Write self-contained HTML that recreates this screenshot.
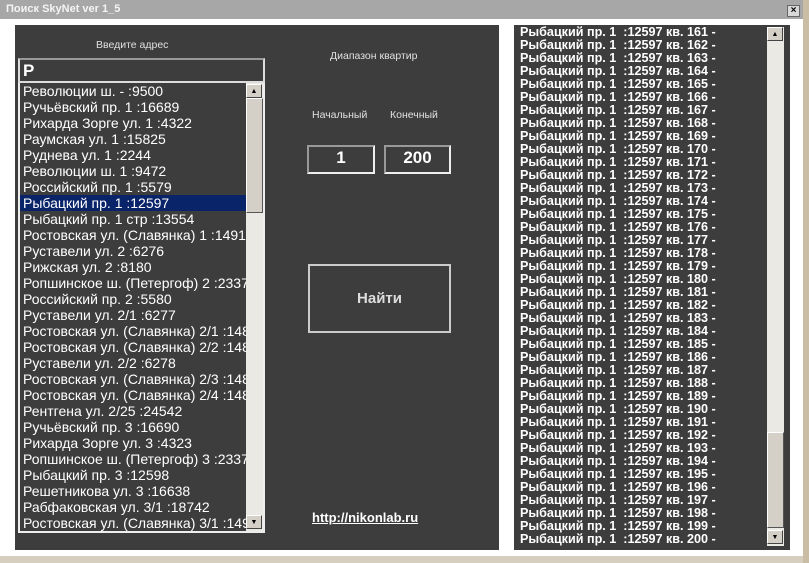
<!DOCTYPE html><html><head><meta charset="utf-8"><style>
*{margin:0;padding:0;box-sizing:border-box}
body{width:809px;height:563px;overflow:hidden;background:#fff;font-family:"Liberation Sans",sans-serif;position:relative}
.abs{position:absolute}
.title{left:0;top:0;width:803px;height:19px;background:#a7a7a7;color:#f4f4f4;font-weight:bold;font-size:11px;line-height:19px;padding-left:6px}
.frame{left:803px;top:0;width:6px;height:563px;background:#c9bda6}
.x{left:787px;top:5px;width:13px;height:12px;background:#d8d8d8;border:1px solid #666;font-size:10px;line-height:10px;text-align:center;font-weight:bold}
.panel{left:15px;top:25px;width:484px;height:525px;background:#3d3d3d}
.rp{left:514px;top:25px;width:276px;height:525px;background:#3d3d3d}
.lbl{color:#e0e0e0;font-size:10.5px}
.inp{left:18px;top:58px;width:247px;height:25px;border:2px solid #ddd;border-top-color:#999;color:#fff;font-weight:bold;font-size:17px;line-height:22px;padding-left:3px}
.list{left:18px;top:83px;width:247px;height:450px;border:2px solid #eee;border-top:0;overflow:hidden}
.list div{height:16px;font-size:14px;color:#fff;line-height:16px;padding-left:3px;white-space:nowrap}
.list .sel{background:#0a246a}
.sb{background:#ebe9e4}
.thumb{background:#d4d0c8;border:1px solid #fff;border-right-color:#555;border-bottom-color:#555}
.arr{background:#d4d0c8;border:1px solid #fff;border-right-color:#444;border-bottom-color:#444;font-size:7px;text-align:center;line-height:13px;color:#000}
.num{border:2px solid #eee;border-top-color:#999;border-left-color:#999;color:#fff;font-weight:bold;font-size:17px;text-align:center;line-height:22px}
.btn{left:308px;top:264px;width:143px;height:69px;border:2px solid #ccc;color:#ddd;font-weight:bold;font-size:15px;text-align:center;line-height:65px}
.rl div{height:13px;font-size:12.6px;font-weight:bold;color:#fff;line-height:13px;white-space:pre}
.link{left:312px;top:510px;color:#fff;font-weight:bold;font-size:13px;text-decoration:underline}
.task{left:0;top:556px;width:803px;height:7px;background:#d6cfc0}
</style></head><body>
<div class="abs title">Поиск SkyNet ver 1_5</div>
<div class="abs frame"></div>
<div class="abs x">×</div>
<div class="abs panel"></div>
<div class="abs lbl" style="left:96px;top:39px">Введите адрес</div>
<div class="abs lbl" style="left:330px;top:50px">Диапазон квартир</div>
<div class="abs lbl" style="left:312px;top:109px">Начальный</div>
<div class="abs lbl" style="left:390px;top:109px">Конечный</div>
<div class="abs inp">Р</div>
<div class="abs list">
<div>Революции ш. - :9500</div><div>Ручьёвский пр. 1 :16689</div><div>Рихарда Зорге ул. 1 :4322</div><div>Раумская ул. 1 :15825</div><div>Руднева ул. 1 :2244</div><div>Революции ш. 1 :9472</div><div>Российский пр. 1 :5579</div><div class="sel">Рыбацкий пр. 1 :12597</div><div>Рыбацкий пр. 1 стр :13554</div><div>Ростовская ул. (Славянка) 1 :14919</div><div>Руставели ул. 2 :6276</div><div>Рижская ул. 2 :8180</div><div>Ропшинское ш. (Петергоф) 2 :23378</div><div>Российский пр. 2 :5580</div><div>Руставели ул. 2/1 :6277</div><div>Ростовская ул. (Славянка) 2/1 :1485</div><div>Ростовская ул. (Славянка) 2/2 :1485</div><div>Руставели ул. 2/2 :6278</div><div>Ростовская ул. (Славянка) 2/3 :1485</div><div>Ростовская ул. (Славянка) 2/4 :1485</div><div>Рентгена ул. 2/25 :24542</div><div>Ручьёвский пр. 3 :16690</div><div>Рихарда Зорге ул. 3 :4323</div><div>Ропшинское ш. (Петергоф) 3 :23379</div><div>Рыбацкий пр. 3 :12598</div><div>Решетникова ул. 3 :16638</div><div>Рабфаковская ул. 3/1 :18742</div><div>Ростовская ул. (Славянка) 3/1 :1494</div>
</div>
<div class="abs sb" style="left:246px;top:83px;width:17px;height:448px"></div>
<div class="abs arr" style="left:246px;top:84px;width:16px;height:14px">▲</div>
<div class="abs thumb" style="left:246px;top:98px;width:17px;height:115px"></div>
<div class="abs arr" style="left:246px;top:515px;width:16px;height:14px">▼</div>
<div class="abs num" style="left:307px;top:145px;width:68px;height:29px">1</div>
<div class="abs num" style="left:384px;top:145px;width:67px;height:29px">200</div>
<div class="abs btn">Найти</div>
<div class="abs link">http://nikonlab.ru</div>
<div class="abs rp"></div>
<div class="abs rl" style="left:520px;top:26px">
<div>Рыбацкий пр. 1  :12597 кв. 161 -</div><div>Рыбацкий пр. 1  :12597 кв. 162 -</div><div>Рыбацкий пр. 1  :12597 кв. 163 -</div><div>Рыбацкий пр. 1  :12597 кв. 164 -</div><div>Рыбацкий пр. 1  :12597 кв. 165 -</div><div>Рыбацкий пр. 1  :12597 кв. 166 -</div><div>Рыбацкий пр. 1  :12597 кв. 167 -</div><div>Рыбацкий пр. 1  :12597 кв. 168 -</div><div>Рыбацкий пр. 1  :12597 кв. 169 -</div><div>Рыбацкий пр. 1  :12597 кв. 170 -</div><div>Рыбацкий пр. 1  :12597 кв. 171 -</div><div>Рыбацкий пр. 1  :12597 кв. 172 -</div><div>Рыбацкий пр. 1  :12597 кв. 173 -</div><div>Рыбацкий пр. 1  :12597 кв. 174 -</div><div>Рыбацкий пр. 1  :12597 кв. 175 -</div><div>Рыбацкий пр. 1  :12597 кв. 176 -</div><div>Рыбацкий пр. 1  :12597 кв. 177 -</div><div>Рыбацкий пр. 1  :12597 кв. 178 -</div><div>Рыбацкий пр. 1  :12597 кв. 179 -</div><div>Рыбацкий пр. 1  :12597 кв. 180 -</div><div>Рыбацкий пр. 1  :12597 кв. 181 -</div><div>Рыбацкий пр. 1  :12597 кв. 182 -</div><div>Рыбацкий пр. 1  :12597 кв. 183 -</div><div>Рыбацкий пр. 1  :12597 кв. 184 -</div><div>Рыбацкий пр. 1  :12597 кв. 185 -</div><div>Рыбацкий пр. 1  :12597 кв. 186 -</div><div>Рыбацкий пр. 1  :12597 кв. 187 -</div><div>Рыбацкий пр. 1  :12597 кв. 188 -</div><div>Рыбацкий пр. 1  :12597 кв. 189 -</div><div>Рыбацкий пр. 1  :12597 кв. 190 -</div><div>Рыбацкий пр. 1  :12597 кв. 191 -</div><div>Рыбацкий пр. 1  :12597 кв. 192 -</div><div>Рыбацкий пр. 1  :12597 кв. 193 -</div><div>Рыбацкий пр. 1  :12597 кв. 194 -</div><div>Рыбацкий пр. 1  :12597 кв. 195 -</div><div>Рыбацкий пр. 1  :12597 кв. 196 -</div><div>Рыбацкий пр. 1  :12597 кв. 197 -</div><div>Рыбацкий пр. 1  :12597 кв. 198 -</div><div>Рыбацкий пр. 1  :12597 кв. 199 -</div><div>Рыбацкий пр. 1  :12597 кв. 200 -</div>
</div>
<div class="abs sb" style="left:767px;top:27px;width:17px;height:519px"></div>
<div class="abs arr" style="left:767px;top:27px;width:16px;height:14px">▲</div>
<div class="abs thumb" style="left:767px;top:432px;width:17px;height:96px"></div>
<div class="abs arr" style="left:767px;top:530px;width:16px;height:14px">▼</div>
<div class="abs task"></div>
</body></html>
